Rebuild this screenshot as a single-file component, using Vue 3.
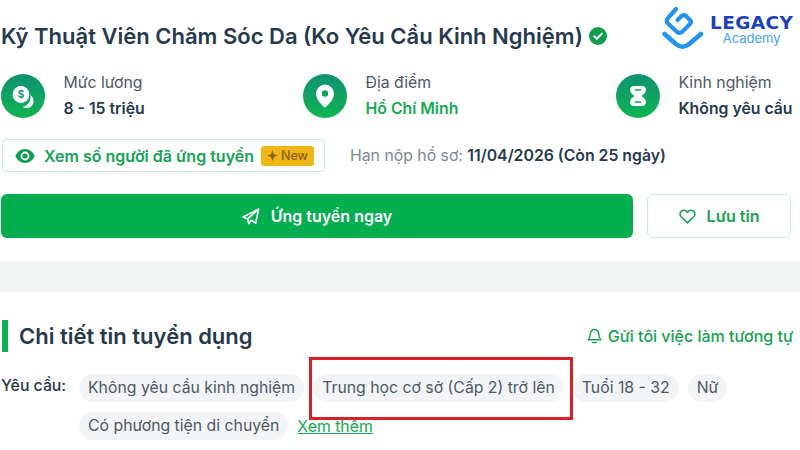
<script setup>
const infos = [
  { key: 'salary', label: 'Mức lương', value: '8 - 15 triệu', cls: '' },
  { key: 'place', label: 'Địa điểm', value: 'Hồ Chí Minh', cls: 'green' },
  { key: 'exp', label: 'Kinh nghiệm', value: 'Không yêu cầu', cls: '' },
]
const row1 = ['Không yêu cầu kinh nghiệm', 'Trung học cơ sở (Cấp 2) trở lên', 'Tuổi 18 - 32', 'Nữ']
</script>

<template>
  <div class="page">
    <header class="head">
      <h1 class="title">Kỹ Thuật Viên Chăm Sóc Da (Ko Yêu Cầu Kinh Nghiệm)</h1>
      <svg class="check" width="18" height="18" viewBox="0 0 18 18">
        <circle cx="9" cy="9" r="9" fill="#0c9f4c" />
        <path d="M5.2 9.2l2.6 2.5 5-5" fill="none" stroke="#fff" stroke-width="2" stroke-linecap="round" stroke-linejoin="round" />
      </svg>
      <div class="logo">
        <svg width="42" height="45" viewBox="0 0 42 45" fill="none" stroke="#2193f2" stroke-linecap="round" stroke-linejoin="round">
          <path d="M2.500 28 L14.500 38.500 Q20.500 43 26.500 38.500 L39 28" stroke-width="4.600" />
          <path d="M14 3 L6 12 Q3.500 15 6 17.500 L15 26 Q18 28 20.500 25.500 L28 18 Q30 15.500 27.500 13.500 L24 10 Q21.500 8 19 10.500 L15.500 14" stroke-width="4.200" />
        </svg>
        <div class="logo-text">
          <span class="legacy">LEGACY</span>
          <span class="academy">Academy</span>
        </div>
      </div>
    </header>

    <section class="infos">
      <div v-for="i in infos" :key="i.key" class="info" :class="'info-' + i.key">
        <div class="circle">
          <svg v-if="i.key === 'salary'" width="28" height="28" viewBox="0 0 28 28">
            <circle cx="12" cy="12.500" r="8.400" fill="#fff" />
            <path d="M21.500 13 C25.500 16 25.500 22 22 24.500 C19.500 26.500 16 26.500 13.500 25 C18.500 24.500 22.500 19 21.500 13z" fill="#fff" />
            <text x="12" y="16" text-anchor="middle" class="dollar">$</text>
          </svg>
          <svg v-else-if="i.key === 'place'" width="24" height="28" viewBox="0 0 24 28">
            <path d="M12 2.500a9 9 0 0 0-9 9c0 6 5.500 11.500 9 14 3.500-2.500 9-8 9-14a9 9 0 0 0-9-9z" fill="#fff" />
            <circle cx="12" cy="11.500" r="3.200" fill="#0fa25c" />
          </svg>
          <svg v-else width="18" height="22" viewBox="0 0 18 22">
            <path d="M5 1h8c2.500 0 4 1.500 4 3.800 0 2.700-2.300 4.800-4.500 6.200 2.200 1.400 4.500 3.500 4.500 6.200 0 2.300-1.500 3.800-4 3.800H5c-2.500 0-4-1.500-4-3.800 0-2.700 2.300-4.800 4.500-6.200C3.300 9.600 1 7.500 1 4.800 1 2.500 2.500 1 5 1z" fill="#fff" />
            <path d="M6.500 5h5M6.500 17h5" stroke="#0fa25c" stroke-width="1.500" stroke-linecap="round" />
          </svg>
        </div>
        <div class="info-text">
          <span class="info-label">{{ i.label }}</span>
          <span class="info-value" :class="i.cls">{{ i.value }}</span>
        </div>
      </div>
    </section>

    <section class="deadline-row">
      <div class="view-box">
        <svg width="20" height="14" viewBox="0 0 20 14">
          <path d="M10 0C5.500 0 2 3 .4 7 2 11 5.500 14 10 14s8-3 9.600-7C18 3 14.500 0 10 0z" fill="#0c9f4c" />
          <circle cx="10" cy="7" r="4.400" fill="#fff" />
          <circle cx="10" cy="7" r="2.600" fill="#0c9f4c" />
        </svg>
        <span class="view-text">Xem số người đã ứng tuyển</span>
        <span class="new-badge">
          <svg width="11" height="11" viewBox="0 0 12 12"><path d="M6 0l1.500 4.500L12 6 7.500 7.500 6 12 4.500 7.500 0 6l4.500-1.500z" fill="#8a6408" /></svg>
          New
        </span>
      </div>
      <div class="deadline"><span class="dl-label">Hạn nộp hồ sơ:</span> <b>11/04/2026 (Còn 25 ngày)</b></div>
    </section>

    <section class="actions">
      <button class="apply">
        <svg width="18" height="17" viewBox="0 0 19 18" fill="none" stroke="#fff" stroke-width="1.700" stroke-linejoin="round" stroke-linecap="round">
          <path d="M17.500 1.200L1.200 9.500l4.600 2.100L17.500 1.200l-3 14.800-5-3-2.300 3.500-1.400-4.900" />
        </svg>
        Ứng tuyển ngay
      </button>
      <button class="save">
        <svg width="17" height="15" viewBox="0 0 18 16" fill="none" stroke="#16a34f" stroke-width="1.700" stroke-linejoin="round">
          <path d="M9 14.800L2.300 8.300a4 4 0 0 1 0-5.800 4.200 4.200 0 0 1 5.800 0L9 3.400l.9-.9a4.200 4.200 0 0 1 5.800 0 4 4 0 0 1 0 5.800z" />
        </svg>
        Lưu tin
      </button>
    </section>

    <div class="band"></div>

    <section class="detail-head">
      <h2 class="detail-title">Chi tiết tin tuyển dụng</h2>
      <a class="notify">
        <svg width="15" height="16" viewBox="0 0 16 17" fill="none" stroke="#16a34f" stroke-width="1.500" stroke-linecap="round" stroke-linejoin="round">
          <path d="M8 1.500a4.500 4.500 0 0 0-4.500 4.500c0 4-1.500 5.500-2.300 6.500h13.600c-.8-1-2.300-2.500-2.300-6.500A4.500 4.500 0 0 0 8 1.500zM6 15.500h4" />
        </svg>
        Gửi tôi việc làm tương tự
      </a>
    </section>

    <section class="req">
      <span class="req-label">Yêu cầu:</span>
      <div class="tags">
        <span v-for="t in row1" :key="t" class="tag">{{ t }}</span>
        <span class="tag">Có phương tiện di chuyển</span>
        <a class="more">Xem thêm</a>
      </div>
    </section>

    <div class="highlight"></div>
  </div>
</template>

<style scoped>
.page {
  position: relative;
  width: 800px;
  height: 450px;
  overflow: hidden;
  background: #fff;
  font-family: Inter, "Noto Sans", sans-serif;
  color: #263a4d;
}
.head {
  display: flex;
  align-items: center;
  height: 60px;
  padding: 12px 0 0 1px;
  box-sizing: border-box;
}
.title {
  margin: 0;
  font-size: 22px;
  line-height: 30px;
  font-weight: 600;
  white-space: nowrap;
  color: #263a4d;
}
.check { margin-left: 6px; flex: none; }
.logo {
  position: absolute;
  left: 662px;
  top: 6px;
  display: flex;
  gap: 6px;
}
.logo-text {
  display: flex;
  flex-direction: column;
  align-items: center;
  padding-top: 9px;
}
.legacy {
  font-family: "DejaVu Sans", sans-serif;
  font-size: 18.500px;
  line-height: 16px;
  font-weight: 700;
  color: #1a3fc0;
  letter-spacing: 0.4px;
}
.academy {
  font-size: 13px;
  line-height: 14px;
  font-weight: 400;
  color: #3fa2f2;
}
.infos {
  display: flex;
  padding: 13px 0 0 1px;
}
.info { display: flex; align-items: center; gap: 18.500px; }
.info-salary { width: 302px; }
.info-place { width: 313px; }
.circle {
  width: 44px;
  height: 44px;
  border-radius: 50%;
  display: flex;
  align-items: center;
  justify-content: center;
  background: linear-gradient(180deg, #0e9272 0%, #0cb550 100%);
  flex: none;
}
.dollar { font: 700 10px Inter, sans-serif; fill: #0e9a6c; }
.info-text { display: flex; flex-direction: column; gap: 6px; white-space: nowrap; }
.info-label { font-size: 15.800px; line-height: 20px; color: #4d5965; }
.info-value { font-size: 15.800px; line-height: 20px; font-weight: 600; color: #263a4d; }
.info-value.green { color: #12ab50; }
.deadline-row {
  display: flex;
  align-items: center;
  padding: 20px 0 0 2px;
}
.view-box {
  display: flex;
  align-items: center;
  width: 323px;
  height: 33px;
  box-sizing: border-box;
  border: 1px solid #c6ecd6;
  border-radius: 4px;
  padding-left: 12px;
}
.view-text {
  margin-left: 9px;
  font-size: 16px;
  font-weight: 600;
  color: #12a452;
  white-space: nowrap;
}
.new-badge {
  display: flex;
  align-items: center;
  gap: 3px;
  margin-left: 7px;
  height: 20px;
  padding: 0 6px;
  border-radius: 3px;
  background: #f1b517;
  color: #8a6408;
  font-size: 12.500px;
  font-weight: 500;
}
.deadline {
  margin-left: 25px;
  font-size: 15.800px;
  color: #7d8791;
  white-space: nowrap;
}
.deadline b { font-weight: 600; color: #263a4d; }
.actions {
  display: flex;
  gap: 14px;
  padding: 22px 0 0 1px;
}
.apply, .save {
  display: flex;
  align-items: center;
  justify-content: center;
  gap: 11px;
  height: 44px;
  border-radius: 6px;
  font-family: inherit;
  font-size: 16px;
  font-weight: 600;
  box-sizing: border-box;
}
.apply {
  width: 632px;
  border: none;
  background: #03ae4f;
  color: #fff;
}
.save {
  width: 144px;
  background: #fff;
  border: 1px solid #c6ecd6;
  color: #16a34f;
}
.band {
  margin-top: 23px;
  height: 31px;
  background: #f3f5f5;
}
.detail-head {
  display: flex;
  align-items: center;
  justify-content: space-between;
  margin-top: 28px;
  height: 32px;
  margin-left: 2px;
  padding: 0 7px 0 11px;
  border-left: 6px solid #0cb054;
}
.detail-title {
  margin: 0;
  font-size: 22px;
  line-height: 32px;
  font-weight: 600;
  color: #263a4d;
}
.notify {
  display: flex;
  align-items: center;
  gap: 6px;
  font-size: 16px;
  font-weight: 500;
  color: #16a34f;
  white-space: nowrap;
}
.req {
  display: flex;
  margin-top: 22px;
  padding-left: 1px;
}
.req-label {
  width: 78px;
  flex: none;
  font-size: 15.800px;
  line-height: 26px;
  font-weight: 500;
  color: #263a4d;
  margin-top: -1px;
}
.tags {
  display: flex;
  flex-wrap: wrap;
  align-items: center;
  gap: 10px 9px;
}
.tag {
  height: 28px;
  line-height: 28px;
  padding: 0 9px;
  border-radius: 14px;
  background: #f2f4f5;
  font-size: 15.800px;
  color: #4d5965;
  white-space: nowrap;
}
.more {
  font-size: 15.800px;
  color: #14a850;
  text-decoration: underline;
}
.highlight {
  position: absolute;
  left: 309px;
  top: 357px;
  width: 264px;
  height: 63px;
  box-sizing: border-box;
  border: 3px solid #dc1f26;
}
</style>
